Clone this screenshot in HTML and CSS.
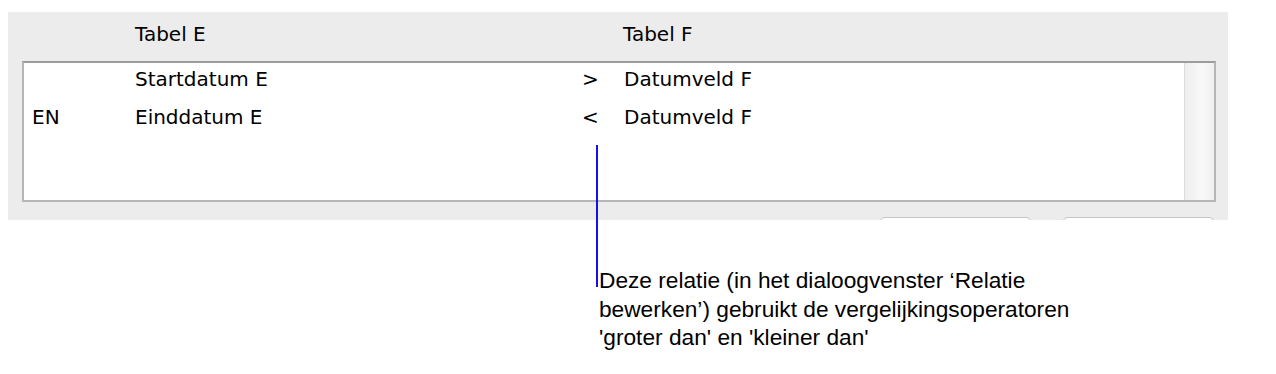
FILE: index.html
```html
<!doctype html>
<html>
    <head>
        <meta http-equiv="Content-Type" content="text/html; charset=utf-8">
        <link rel="stylesheet" href="styles.css">
    </head>
    <body>
        <div class="dialog">
            <div class="heads">
                <span></span>
                <span>Tabel E</span>
                <span></span>
                <span>Tabel F</span>
            </div>
            <div class="list">
                <div class="rows">
                    <div class="row">
                        <span></span>
                        <span>Startdatum E</span>
                        <span class="op">&gt;</span>
                        <span>Datumveld F</span>
                    </div>
                    <div class="row">
                        <span>EN</span>
                        <span>Einddatum E</span>
                        <span class="op">&lt;</span>
                        <span>Datumveld F</span>
                    </div>
                </div>
                <div class="scroll"></div>
            </div>
            <div class="buttons">
                <button></button>
                <button></button>
            </div>
        </div>
        <p class="note">
            Deze relatie (in het dialoogvenster ‘Relatie<br>
            bewerken’) gebruikt de vergelijkingsoperatoren<br>
            'groter dan' en 'kleiner dan'
        </p>
    </body>
</html>
```

FILE: styles.css
```css
body{
    margin: 0;
    padding: 12px 0 0 8px;
    background: #fff;
}
.dialog{
    width: 1220px;
    height: 208px;
    box-sizing: border-box;
    padding: 10px 12px 0 14px;
    background: #ececec;
    overflow: hidden;
    font-family: "DejaVu Sans", sans-serif;
    font-size: 20px;
    color: #000;
}
.heads, .row{
    display: grid;
    grid-template-columns: 103px 450px 39px 1fr;
    line-height: 24px;
    height: 24px;
}
.heads{
    padding-left: 113px;
    grid-template-columns: 0 488px 0 1fr;
}
.list{
    display: flex;
    height: 141px;
    box-sizing: border-box;
    margin-top: 15px;
    background: #fff;
    border: 2px solid #b6b6b6;
    border-top-color: #9c9c9c;
}
.rows{
    flex: 1;
    padding: 4px 0 0 8px;
    display: flex;
    flex-direction: column;
    gap: 14px;
}
.op{
    margin-left: -3px;
}
.scroll{
    width: 29px;
    border-left: 1px solid #dcdcdc;
    background: linear-gradient(to right, #ededed, #f9f9f9 60%, #f0f0f0);
}
.buttons{
    display: flex;
    justify-content: flex-end;
    gap: 30px;
    margin-top: 15px;
    padding-right: 1px;
}
.buttons button{
    width: 153px;
    height: 26px;
    border: 1px solid #c4c4c4;
    border-radius: 6px;
    background: #fff;
}
.note{
    position: relative;
    margin: 46px 0 0 591px;
    font-family: "Liberation Sans", Arial, sans-serif;
    font-size: 22.7px;
    line-height: 28.5px;
    color: #000;
}
.note::before{
    content: "";
    position: absolute;
    left: -3px;
    top: -121px;
    width: 2px;
    height: 142px;
    background: #1010f0;
}
```
